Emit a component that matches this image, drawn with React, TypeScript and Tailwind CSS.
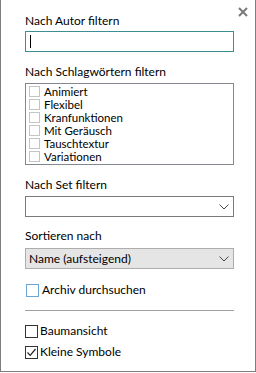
import React from 'react'

const tags = ['Animiert', 'Flexibel', 'Kranfunktionen', 'Mit Geräusch', 'Tauschtextur', 'Variationen']

function Chevron() {
	return (
		<svg width="10" height="6" viewBox="0 0 10 6" className="text-[#444]">
			<path d="M0.5 0.5 L5 5 L9.5 0.5" fill="none" stroke="currentColor" strokeWidth="1" />
		</svg>
	)
}

function Check({ checked, tone }: { checked?: boolean; tone: string }) {
	return (
		<span className={`w-[13px] h-[13px] border ${tone} bg-white flex items-center justify-center shrink-0`}>
			{checked && (
				<svg width="11" height="11" viewBox="0 0 11 11">
					<path d="M1.5 5.5 L4.2 8.3 L9.5 2" fill="none" stroke="#222" strokeWidth="1.2" />
				</svg>
			)}
		</span>
	)
}

export default function App() {
	return (
		<div
			className="relative w-[256px] h-[372px] bg-white border-l border-r border-b border-[#7d7d7d] text-[12px] text-black"
			style={{ fontFamily: '"Segoe UI", Lato, "Liberation Sans", sans-serif' }}
		>
			{/* schließen */}
			<button className="absolute right-[6px] top-[6px] w-[12px] h-[12px] flex items-center justify-center">
				<svg width="10" height="10" viewBox="0 0 10 10">
					<path d="M1 1 L9 9 M9 1 L1 9" stroke="#7a7a7a" strokeWidth="2" />
				</svg>
			</button>

			<div className="pl-[24px] pt-[13px] w-[233px] flex flex-col">
				<label className="leading-[16px]">Nach Autor filtern</label>
				<div className="mt-[2px] h-[21px] border border-[#3d8e93] flex items-center pl-[4px]">
					<span className="w-px h-[13px] bg-black" />
				</div>

				<label className="mt-[12px] leading-[16px]">Nach Schlagwörtern filtern</label>
				<div className="mt-[3px] h-[82px] border border-[#828790] pt-[1px] pl-[3px]">
					{tags.map((t) => (
						<div key={t} className="h-[13px] flex items-center gap-[4px] overflow-hidden">
							<span className="w-[11px] h-[11px] border border-[#c4c4c4] bg-white shrink-0" />
							<span className="text-[11.5px] leading-[13px]">{t}</span>
						</div>
					))}
				</div>

				<label className="mt-[12px] leading-[16px]">Nach Set filtern</label>
				<div className="mt-[3px] h-[21px] border border-[#7a7a7a] bg-white flex items-center justify-end pr-[4px]">
					<Chevron />
				</div>

				<label className="mt-[11px] leading-[16px]">Sortieren nach</label>
				<div className="mt-[4px] h-[21px] border border-[#adadad] bg-[#e5e5e5] flex items-center justify-between pl-[3px] pr-[4px]">
					<span>Name (aufsteigend)</span>
					<Chevron />
				</div>

				<div className="mt-[13px] h-[16px] flex items-center gap-[3px] pl-px">
					<Check tone="border-[#6aa6d6]" />
					<span>Archiv durchsuchen</span>
				</div>

				<div className="mt-[12px] h-px bg-[#a0a0a0]" />

				<div className="mt-[12px] h-[16px] flex items-center gap-[2px]">
					<Check tone="border-[#333]" />
					<span>Baumansicht</span>
				</div>
				<div className="mt-[5px] h-[16px] flex items-center gap-[2px]">
					<Check checked tone="border-[#333]" />
					<span>Kleine Symbole</span>
				</div>
			</div>
		</div>
	)
}
